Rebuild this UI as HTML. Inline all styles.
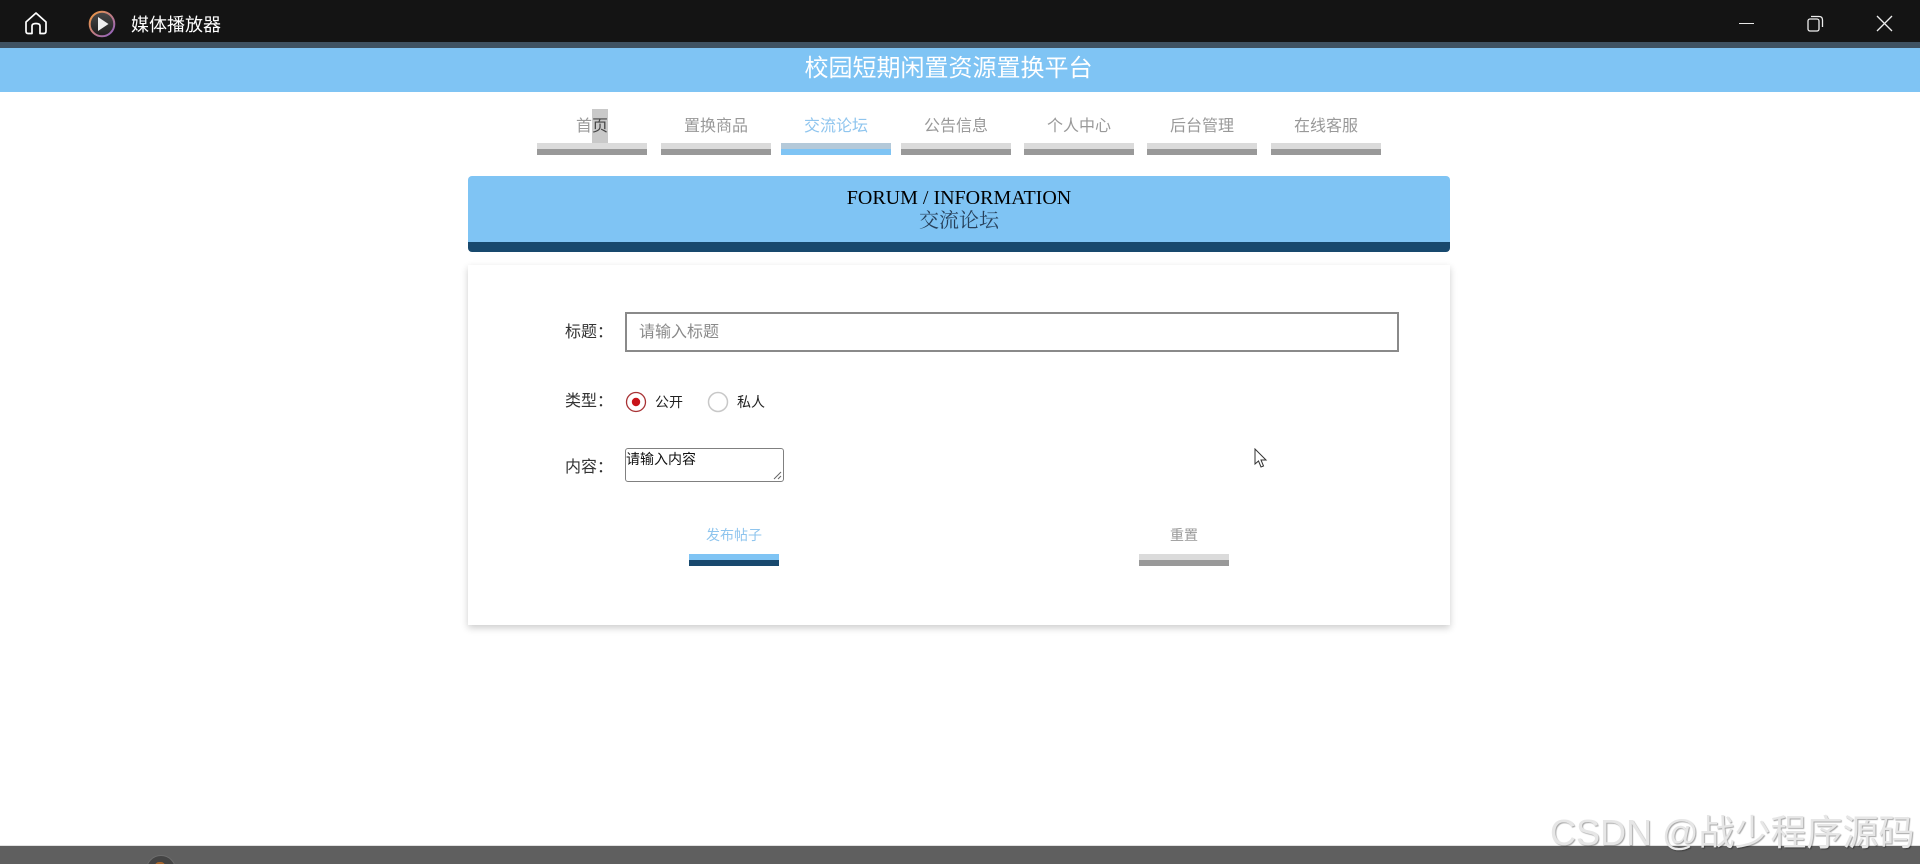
<!DOCTYPE html>
<html lang="zh"><head><meta charset="utf-8"><title>媒体播放器</title>
<style>
html,body{margin:0;padding:0;background:#fff;width:1920px;height:864px;overflow:hidden}
#r{width:1920px;height:864px;position:relative;overflow:hidden;font-family:"Liberation Sans","Noto Sans CJK SC",sans-serif}
.a{position:absolute}
.t{position:absolute;white-space:nowrap;line-height:1}
.nb{position:absolute;top:143px;width:110px;height:12px;background:linear-gradient(#dbdbdb 50%,#999 50%)}
.nt{position:absolute;top:119px;width:110px;text-align:center;font-size:16px;line-height:16px;color:#999;white-space:nowrap}
</style></head><body><div id="r">
<div class="a" style="left:0;top:0;width:1920px;height:42px;background:#141414"></div>
<div class="a" style="left:0;top:42px;width:1920px;height:6px;background:#3f5262"></div>
<svg class="a" style="left:24px;top:11px" width="24" height="24" viewBox="0 0 24 24" fill="none" stroke="#fff" stroke-width="1.7" stroke-linejoin="round"><path d="M2 11 L12 2 L22 11 V20 Q22 22.500 20 22.500 H16 V15 Q16 12.500 12 12.500 Q8 12.500 8 15 V22.500 H4 Q2 22.500 2 20 Z"/></svg>
<svg class="a" style="left:88px;top:10px" width="28" height="28" viewBox="0 0 28 28"><defs><linearGradient id="g" x1="0" y1="0" x2="1" y2="1"><stop offset="0" stop-color="#f39a3c"/><stop offset="1" stop-color="#8d5fc8"/></linearGradient><linearGradient id="h" x1="0" y1="0" x2="0" y2="1"><stop offset="0" stop-color="#4a4a4a"/><stop offset="1" stop-color="#1c1c1c"/></linearGradient></defs><circle cx="14" cy="14" r="12.300" fill="url(#h)" stroke="url(#g)" stroke-width="2"/><path d="M10 7 L20.500 14 L10 21 Z" fill="#eee"/></svg>
<div class="t" style="left:131px;top:16px;font-size:18px;color:#fff">媒体播放器</div>
<div class="a" style="left:1739px;top:23px;width:15px;height:1px;background:#e8e8e8"></div>
<svg class="a" style="left:1807px;top:15px" width="17" height="17" viewBox="0 0 17 17" fill="none" stroke="#eee" stroke-width="1.300"><rect x="1" y="4" width="11" height="12" rx="2"/><path d="M4 1.500 H12 Q15.500 1.500 15.500 5 V12"/></svg>
<svg class="a" style="left:1876px;top:15px" width="17" height="17" viewBox="0 0 17 17" stroke="#eee" stroke-width="1.300"><path d="M1 1 L16 16 M16 1 L1 16"/></svg>

<div class="a" style="left:0;top:48px;width:1920px;height:44px;background:#7fc4f4"></div>
<div class="t" style="left:0;top:57px;width:1897px;text-align:center;font-size:24px;color:#fff">校园短期闲置资源置换平台</div>

<div class="a" style="left:592px;top:109px;width:16px;height:34px;background:#c9c9c9"></div>
<div class="nt" style="left:537px">首<span style="color:#444">页</span></div><div class="nb" style="left:537px"></div>
<div class="nt" style="left:661px">置换商品</div><div class="nb" style="left:661px"></div>
<div class="nt" style="left:781px;color:#8fc5ee">交流论坛</div><div class="nb" style="left:781px;background:linear-gradient(#b4c9d9 50%,#7fc4f4 50%)"></div>
<div class="nt" style="left:901px">公告信息</div><div class="nb" style="left:901px"></div>
<div class="nt" style="left:1024px">个人中心</div><div class="nb" style="left:1024px"></div>
<div class="nt" style="left:1147px">后台管理</div><div class="nb" style="left:1147px"></div>
<div class="nt" style="left:1271px">在线客服</div><div class="nb" style="left:1271px"></div>

<div class="a" style="left:468px;top:176px;width:982px;height:66px;background:#7fc4f4;border-radius:4px 4px 0 0"></div>
<div class="a" style="left:468px;top:242px;width:982px;height:10px;background:#18496e;border-radius:0 0 4px 4px"></div>
<div class="t" style="left:468px;top:188px;width:982px;text-align:center;font:20px/20px 'Liberation Serif','Noto Serif CJK SC',serif;color:#000">FORUM / INFORMATION</div>
<div class="t" style="left:468px;top:211px;width:982px;text-align:center;font:20px/20px 'Liberation Serif','Noto Serif CJK SC',serif;color:#27405a">交流论坛</div>

<div class="a" style="left:468px;top:265px;width:982px;height:360px;background:#fff;box-shadow:0 3px 7px rgba(0,0,0,.2)"></div>
<div class="t" style="left:565px;top:325px;font-size:16px;color:#333">标题：</div>
<div class="a" style="left:625px;top:312px;width:770px;height:36px;border:2px solid #8a8a8a"></div>
<div class="t" style="left:639px;top:325px;font-size:16px;color:#8a8a8a">请输入标题</div>
<div class="t" style="left:565px;top:394px;font-size:16px;color:#333">类型：</div>
<svg class="a" style="left:625px;top:391px" width="22" height="22" viewBox="0 0 22 22"><circle cx="11" cy="11" r="9.500" fill="#fff" stroke="#a83234" stroke-width="1.300"/><circle cx="11" cy="11" r="4.200" fill="#c8141a"/></svg>
<div class="t" style="left:655px;top:395px;font-size:14px;color:#222">公开</div>
<svg class="a" style="left:707px;top:391px" width="22" height="22" viewBox="0 0 22 22"><circle cx="11" cy="11" r="9.500" fill="#fff" stroke="#c8c8c8" stroke-width="1.500"/></svg>
<div class="t" style="left:737px;top:395px;font-size:14px;color:#222">私人</div>
<div class="t" style="left:565px;top:460px;font-size:16px;color:#333">内容：</div>
<div class="a" style="left:625px;top:448px;width:157px;height:32px;border:1px solid #808080;border-radius:3px"></div>
<div class="t" style="left:626px;top:452px;font-size:14px;color:#111">请输入内容</div>
<svg class="a" style="left:773px;top:471px" width="9" height="9" viewBox="0 0 9 9" stroke="#666" stroke-width="1"><path d="M1 8 L8 1 M5 8 L8 5"/></svg>

<div class="t" style="left:689px;top:528px;width:90px;text-align:center;font-size:14px;color:#8fc5ee">发布帖子</div>
<div class="a" style="left:689px;top:554px;width:90px;height:12px;background:linear-gradient(#7fc4f4 50%,#18496e 50%)"></div>
<div class="t" style="left:1139px;top:528px;width:90px;text-align:center;font-size:14px;color:#999">重置</div>
<div class="a" style="left:1139px;top:554px;width:90px;height:12px;background:linear-gradient(#dbdbdb 50%,#999 50%)"></div>

<svg class="a" style="left:1254px;top:448px" width="14" height="21" viewBox="0 0 14 21" fill="#fff" stroke="#333" stroke-width="1"><path d="M1 1 V16 L4.500 13 L7 19 L9.500 18 L7 12 L12 12 Z"/></svg>

<div class="a" style="left:0;top:845px;width:1920px;height:1px;background:#e2e2e2"></div>
<div class="a" style="left:0;top:846px;width:1920px;height:18px;background:#5f5f5f"></div>
<div class="a" style="left:146px;top:855px;width:28px;height:28px;border-radius:50%;background:#444;border:1px solid #6d6d6d"></div>
<div class="a" style="left:155px;top:862px;width:10px;height:4px;background:#a8662c;border-radius:5px 5px 0 0"></div>
<div class="t" style="left:1550px;top:815px;font-size:36px;line-height:36px;color:#e6e6e6;text-shadow:1px 1px 1px rgba(0,0,0,.35);white-space:nowrap">CSDN @战少程序源码</div>
</div></body></html>
